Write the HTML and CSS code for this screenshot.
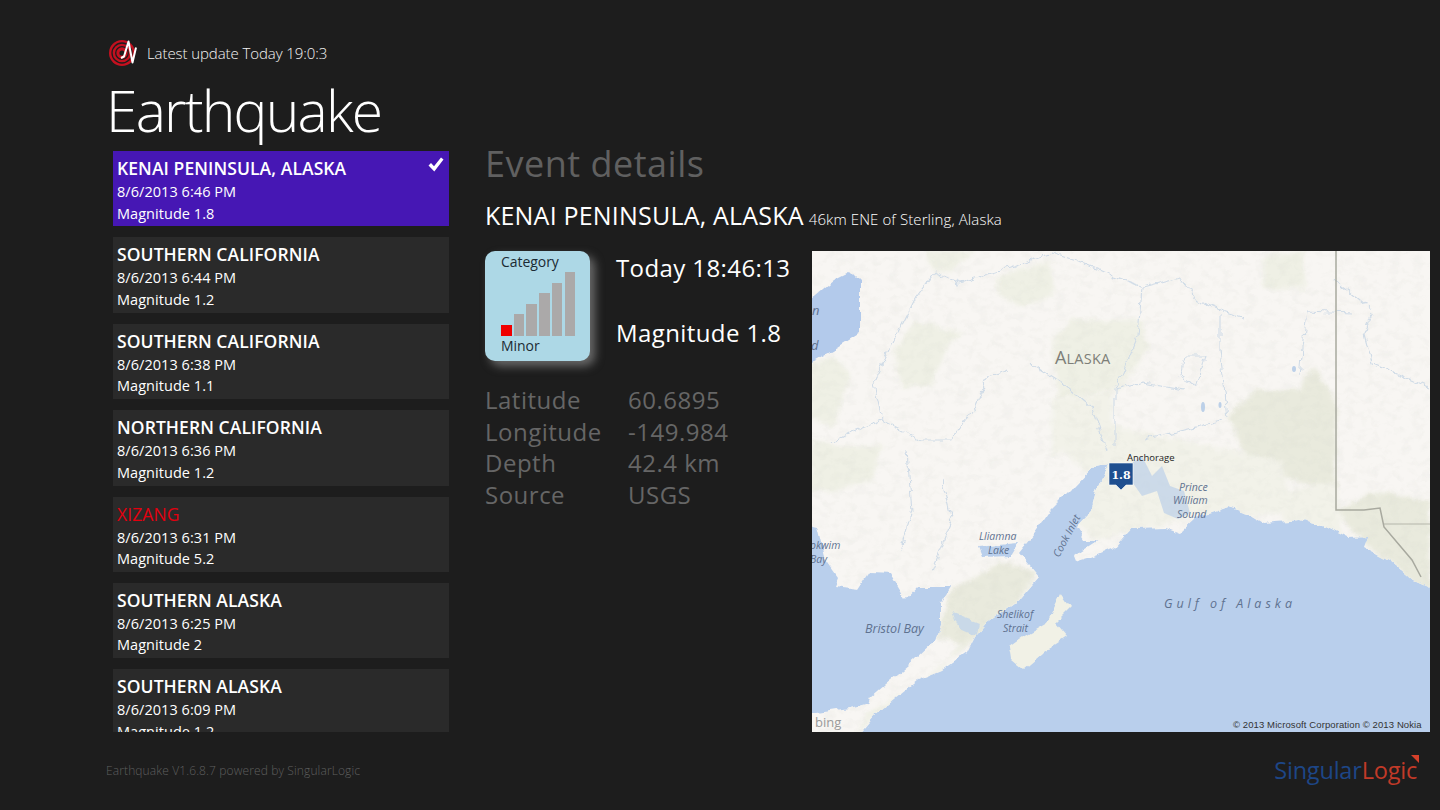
FILE: index.html
```html
<!DOCTYPE html>
<html lang="en">
<head>
<meta charset="utf-8">
<title>Earthquake</title>
<link rel="stylesheet" href="styles.css">
</head>
<body>
<div class="page">
  <header class="header">
    <div class="update">
      <svg class="logo" viewBox="0 0 30 30" aria-hidden="true">
        <circle cx="14" cy="15" r="13" fill="#c4101f"/>
        <circle cx="14" cy="15" r="10" fill="none" stroke="#1d1d1d" stroke-width="1.300"/>
        <circle cx="14" cy="15" r="6.300" fill="none" stroke="#1d1d1d" stroke-width="1.300"/>
        <circle cx="14" cy="15" r="2.600" fill="#1d1d1d"/>
        <path d="M13 20l3-1.500 4.500-15 4 21 3.500-15" fill="none" stroke="#fff" stroke-width="2" stroke-linejoin="round"/>
      </svg>
      <span>Latest update Today 19:0:3</span>
    </div>
    <h1 class="app-title">Earthquake</h1>
  </header>

  <main class="content">
    <section class="list">
      <article class="item selected">
        <h2 class="place">KENAI PENINSULA, ALASKA</h2>
        <p>8/6/2013 6:46 PM</p>
        <p>Magnitude 1.8</p>
        <svg class="check" viewBox="0 0 16 16" aria-hidden="true"><path d="M0.500 8.500l2.500-2.500 3 3.200 7-8.700 2.500 2-9.200 12z" fill="#fff"/></svg>
      </article>
      <article class="item"><h2 class="place">SOUTHERN CALIFORNIA</h2><p>8/6/2013 6:44 PM</p><p>Magnitude 1.2</p></article>
      <article class="item"><h2 class="place">SOUTHERN CALIFORNIA</h2><p>8/6/2013 6:38 PM</p><p>Magnitude 1.1</p></article>
      <article class="item"><h2 class="place">NORTHERN CALIFORNIA</h2><p>8/6/2013 6:36 PM</p><p>Magnitude 1.2</p></article>
      <article class="item"><h2 class="place alert">XIZANG</h2><p>8/6/2013 6:31 PM</p><p>Magnitude 5.2</p></article>
      <article class="item"><h2 class="place">SOUTHERN ALASKA</h2><p>8/6/2013 6:25 PM</p><p>Magnitude 2</p></article>
      <article class="item"><h2 class="place">SOUTHERN ALASKA</h2><p>8/6/2013 6:09 PM</p><p>Magnitude 1.2</p></article>
    </section>

    <section class="details">
      <h2 class="section-title">Event details</h2>
      <div class="event-head">
        <span class="event-place">KENAI PENINSULA, ALASKA</span>
        <span class="event-sub">46km ENE of Sterling, Alaska</span>
      </div>
      <div class="event-body">
        <div class="facts">
          <div class="summary">
            <div class="tile">
              <span class="tile-label">Category</span>
              <div class="bars">
                <i class="bar level-1 on"></i><i class="bar level-2"></i><i class="bar level-3"></i><i class="bar level-4"></i><i class="bar level-5"></i><i class="bar level-6"></i>
              </div>
              <span class="tile-label">Minor</span>
            </div>
            <div class="headline">
              <span>Today 18:46:13</span>
              <span>Magnitude 1.8</span>
            </div>
          </div>
          <dl class="coords">
            <dt>Latitude</dt><dd>60.6895</dd>
            <dt>Longitude</dt><dd>-149.984</dd>
            <dt>Depth</dt><dd>42.4 km</dd>
            <dt>Source</dt><dd>USGS</dd>
          </dl>
        </div>
        <div class="map">
          <svg class="map-svg" viewBox="0 0 618 481" aria-label="Map of Alaska">
            <defs>
              <filter id="soft" x="-10%" y="-10%" width="120%" height="120%"><feGaussianBlur stdDeviation="2"/></filter>
              <filter id="grain" x="0" y="0" width="100%" height="100%">
                <feTurbulence type="fractalNoise" baseFrequency="0.09 0.13" numOctaves="3" seed="4"/>
                <feColorMatrix values="0 0 0 0 0.62  0 0 0 0 0.64  0 0 0 0 0.58  0 0 0 1.6 -0.72"/>
              </filter>
              <filter id="rough" x="-2%" y="-2%" width="104%" height="104%">
                <feTurbulence type="fractalNoise" baseFrequency="0.07" numOctaves="3" seed="7" result="n"/>
                <feDisplacementMap in="SourceGraphic" in2="n" scale="8" xChannelSelector="R" yChannelSelector="G"/>
              </filter>
              <filter id="wiggle" x="-5%" y="-5%" width="110%" height="110%">
                <feTurbulence type="fractalNoise" baseFrequency="0.12" numOctaves="2" seed="3" result="n"/>
                <feDisplacementMap in="SourceGraphic" in2="n" scale="9" xChannelSelector="R" yChannelSelector="G"/>
              </filter>
              <clipPath id="land-clip"><path d="M-20 -20H640V346L601 329 577 309 552 296 556 286 536 287 516 277 488 269 452 272 436 262 416 256 400 262 384 267 368 282 352 276 319 277 303 296 279 306 263 311 261 306 287 289 271 289 263 276 279 259 285 238 297 212 284 215 263 237 259 239 239 259 223 282 207 302 227 326 207 349 175 372 163 386 155 402 131 419 106 429 94 439 78 452 62 466 46 485H-20V462L6 462 38 457 56 452 58 446 78 429 102 409 123 389 129 372 129 352 139 336 118 336 106 336 94 349 86 336 78 322 58 321 46 339 22 336 26 326 14 309 6 276-20 270Z"/></clipPath>
            </defs>
            <rect width="618" height="481" fill="#b9cfec"/>
            <g filter="url(#rough)">
              <rect x="-20" y="-20" width="660" height="520" fill="#f8f6f3" clip-path="url(#land-clip)"/>
              <g clip-path="url(#land-clip)">
                <g fill="#eff0e5" filter="url(#soft)">
                  <path d="M185 26L239 9 241 46 207 56 185 42Z"/>
                  <path d="M239 89L259 69 331 69 336 99 307 139 247 149Z"/>
                  <path d="M82 99L102 71 153 81 135 96 119 136 90 136Z"/>
                  <path d="M-2 112L22 106 38 122 22 176-2 166Z"/>
                  <path d="M452 6L492 0 492 39 452 36Z"/>
                  <path d="M115 0H165L140 20 118 18Z"/>
                  <path d="M-2 190L30 195 70 195 60 230 20 240-2 240Z"/>
                  <path d="M227 326L160 370 131 419 60 460 40 485 90 445 150 400Z"/>
                </g>
                <g fill="#e9eadd" filter="url(#soft)">
                  <path d="M416 166L444 139 488 139 500 116 524 149 524 239 440 219Z"/>
                  <path d="M524 260L560 240 618 250 618 350 590 320 550 290Z"/>
                  <path d="M139 340L190 310 225 322 205 350 165 385 150 395 125 385Z"/>
                </g>
                <g fill="#f2f2e9" filter="url(#soft)">
                  <path d="M240 190L300 175 470 210 480 265 400 262 320 280 285 290 260 270 285 230Z"/>
                  <path d="M470 240L524 230 530 285 470 270Z"/>
                  <path d="M240 150L300 140 300 190 240 205Z"/>
                </g>
                <rect width="618" height="481" filter="url(#grain)" opacity=".22"/>
              </g>
              <path d="M197 396L211 386 235 372 249 342 259 356 243 372 255 386 231 402 211 419 199 409Z" fill="#f1f1e6"/>
              <path d="M-2 49L22 29 38 21 48 31 48 82 26 96-2 112Z" fill="#b3caeb"/>
              <path d="M167 296L207 292 199 305 171 306Z" fill="#b9cfec"/>
              <path d="M140 362L166 372 164 384 146 376Z" fill="#c9d9e8"/>
            </g>
            <g fill="none" stroke="#cfdbe7" stroke-width="1.100" stroke-linejoin="round" filter="url(#wiggle)">
              <path d="M20 192L38 182 70 169 62 132 82 89 102 49 123 21 147 32 199 16 239 2 271 12 303 26 331 36 368 26 384 49 408 59 432 67"/>
              <path d="M70 169L110 189 139 189 163 156 175 126 195 119"/>
              <path d="M219 112L251 132 279 156 295 199"/>
              <path d="M303 196L303 139 331 132 372 139"/>
              <path d="M331 189L412 169"/>
              <path d="M408 62L408 99 416 166"/>
              <path d="M560 62L552 82 560 112 617 136"/>
              <path d="M524 29L560 59"/>
              <path d="M330 36L326 85 303 139"/>
              <path d="M488 125L495 60 540 62"/>
              <path d="M372 105L368 125 385 135 392 105Z"/>
              <path d="M95 200L100 260 88 300"/>
              <path d="M130 230L140 270 120 320"/>
            </g>
            <g fill="#bcd0e8">
              <path d="M320 212L330 205 340 225 350 215 358 235 372 240 378 262 366 268 352 262 345 240 330 245 318 228Z" opacity=".7"/>
              <ellipse cx="482" cy="118" rx="2" ry="3"/>
              <ellipse cx="391" cy="156" rx="2" ry="5"/>
              <ellipse cx="408" cy="154" rx="1.500" ry="3"/>
            </g>
            <g fill="none" stroke="#a8a99f">
              <path d="M524 0V259H552L568 257 572 276 600 309 609 326" stroke-width="1.500"/>
              <path d="M572 273H618" stroke-width=".8"/>
            </g>
            <g class="map-label">
              <text class="state" x="243" y="113">A<tspan class="state-small">LASKA</tspan></text>
              <text class="water" x="0" y="64">n</text>
              <text class="water" x="-1" y="99">d</text>
              <text class="water sm" x="-2" y="298">okwim</text>
              <text class="water sm" x="-2" y="312">Bay</text>
              <text class="water sm" x="167" y="289">Lliamna</text>
              <text class="water sm" x="176" y="303">Lake</text>
              <text class="water sm" transform="translate(247 307) rotate(-62)">Cook Inlet</text>
              <text class="water sm" x="185" y="367">Shelikof</text>
              <text class="water sm" x="191" y="381">Strait</text>
              <text class="water md" x="53" y="382">Bristol Bay</text>
              <text class="water sm" x="367" y="240">Prince</text>
              <text class="water sm" x="361" y="253">William</text>
              <text class="water sm" x="365" y="267">Sound</text>
              <text class="gulf" x="352" y="357">Gulf of Alaska</text>
              <text class="city" x="315" y="210">Anchorage</text>
              <text class="bing" x="3" y="476">bing</text>
              <text class="copy" x="421" y="477">© 2013 Microsoft Corporation © 2013 Nokia</text>
            </g>
            <g class="pin">
              <path d="M297 212H321V234H314L309 239 304 234H297Z" fill="#1f4f8f" stroke="#fff" stroke-width=".6"/>
              <text x="309" y="228">1.8</text>
            </g>
          </svg>
        </div>
      </div>
    </section>
  </main>

  <footer class="footer">
    <span class="version">Earthquake V1.6.8.7 powered by SingularLogic</span>
    <span class="brand"><span class="brand-blue">Singular</span><span class="brand-red">Logic</span><i class="brand-mark"></i></span>
  </footer>
</div>
</body>
</html>
```

FILE: styles.css
```css
* { box-sizing: border-box; }
html, body { margin: 0; padding: 0; }
body {
  background: #1d1d1d;
  color: #fff;
  font-family: "Open Sans", "Noto Sans", "Liberation Sans", sans-serif;
  overflow: hidden;
}
.page {
  width: 1440px;
  height: 810px;
  display: flex;
  flex-direction: column;
  padding: 38px 10px 0 106px;
}
.header { height: 113px; flex: none; }
.update {
  display: flex;
  align-items: center;
  gap: 9px;
  padding-left: 2px;
  height: 30px;
  font-size: 15px;
  font-weight: 300;
  letter-spacing: -.08px;
  color: #f4f4f4;
}
.logo { width: 30px; height: 30px; flex: none; }
.app-title {
  margin: 7px 0 0;
  font-size: 57px;
  line-height: 70px;
  font-weight: 300;
  letter-spacing: -1.800px;
  height: 76px;
}
.content { display: flex; flex: 1; min-height: 0; }
.list {
  width: 336px;
  margin-left: 7px;
  height: 581px;
  overflow: hidden;
  flex: none;
  display: flex;
  flex-direction: column;
  gap: 11px;
}
.item {
  position: relative;
  flex: none;
  height: 75.400px;
  padding: 5px 4px 0;
  background: #2a2a2a;
  font-size: 14.500px;
  font-weight: 400;
  line-height: 21.500px;
  letter-spacing: .05px;
}
.item p { margin: 0; }
.item.selected { background: #4617b4; }
.place {
  margin: 0;
  font-size: 17.500px;
  line-height: 25px;
  font-weight: 600;
  letter-spacing: .08px;
}
.place.alert { color: #e3000f; font-weight: 400; }
.check { position: absolute; top: 6px; right: 5px; width: 16px; height: 16px; }
.details { margin-left: 36px; flex: 1; min-width: 0; }
.section-title {
  margin: -9px 0 0;
  font-size: 36px;
  line-height: 44px;
  font-weight: 400;
  letter-spacing: .5px;
  color: #606060;
}
.event-head {
  display: flex;
  align-items: baseline;
  gap: 5px;
  height: 48px;
  padding-top: 13px;
}
.event-place { font-size: 25px; line-height: 32px; letter-spacing: .2px; }
.event-sub { font-size: 15px; font-weight: 300; letter-spacing: .1px; }
.event-body { display: flex; margin-top: 17px; }
.facts { width: 327px; flex: none; }
.summary { display: flex; }
.tile {
  width: 105px;
  height: 110px;
  padding: 1px 15px 0 16px;
  border-radius: 10px;
  background: #add8e6;
  box-shadow: 5px 5px 10px rgba(170,170,170,.55);
  color: #1b2a33;
  display: flex;
  flex-direction: column;
  flex: none;
}
.tile-label { font-size: 14px; line-height: 19px; letter-spacing: -.05px; margin-right: -15px; }
.bars { display: flex; align-items: flex-end; gap: 2.200px; height: 65px; }
.bar { display: block; flex: 1; background: #aba9a9; }
.bar.on { background: #f00000; }
.level-1 { height: 10.600px; }
.level-2 { height: 21.700px; }
.level-3 { height: 32.300px; }
.level-4 { height: 42.700px; }
.level-5 { height: 53.300px; }
.level-6 { height: 63.700px; }
.headline {
  margin-left: 26px;
  display: flex;
  flex-direction: column;
  gap: 33px;
  font-size: 24px;
  line-height: 32px;
  white-space: nowrap;
  letter-spacing: .4px;
  padding-top: 1px;
}
.coords {
  margin: 23px 0 0;
  display: grid;
  grid-template-columns: 143px 1fr;
  grid-auto-rows: 31.700px;
  font-size: 24px;
  line-height: 31.700px;
  letter-spacing: .5px;
  color: #666;
}
.coords dt, .coords dd { margin: 0; font-weight: 400; }
.map { flex: none; width: 618px; height: 481px; background: #b9cfec; }
.map-svg { display: block; width: 618px; height: 481px; overflow: hidden; }
.map-label text { font-family: "Open Sans", sans-serif; }
.state { font-size: 18px; fill: #7d7e78; letter-spacing: .2px; }
.state-small { font-size: 14.500px; }
.water { font-style: italic; fill: #5f7290; font-size: 13px; }
.water.sm { font-size: 10.500px; }
.water.md { font-size: 12.500px; }
.gulf { font-style: italic; font-size: 12.500px; fill: #5f7290; letter-spacing: 4px; }
.city { font-size: 9.500px; fill: #1f1f1f; }
.map-label .bing { font-size: 13px; fill: #9a9a9a; }
.map-label .copy { font-family: "Liberation Sans", sans-serif; font-size: 9.500px; fill: #333; letter-spacing: .1px; }
.pin text { font-family: "DejaVu Serif", serif; font-size: 11px; font-weight: 700; fill: #fff; text-anchor: middle; }
.footer {
  height: 78px;
  flex: none;
  display: flex;
  justify-content: space-between;
  align-items: flex-start;
  padding-top: 29px;
}
.version { font-size: 12px; font-weight: 300; color: #5f5f5f; line-height: 20px; letter-spacing: .12px; }
.brand { position: relative; font-size: 23.500px; line-height: 24px; letter-spacing: -.2px; margin-right: 11px; padding-right: 2px; margin-top: -3px; }
.brand-blue { color: #1d4687; }
.brand-red { color: #c23a28; }
.brand-mark {
  position: absolute;
  top: -3px;
  right: 0;
  width: 0;
  height: 0;
  border-top: 8px solid #d6402a;
  border-left: 8px solid transparent;
}
```
